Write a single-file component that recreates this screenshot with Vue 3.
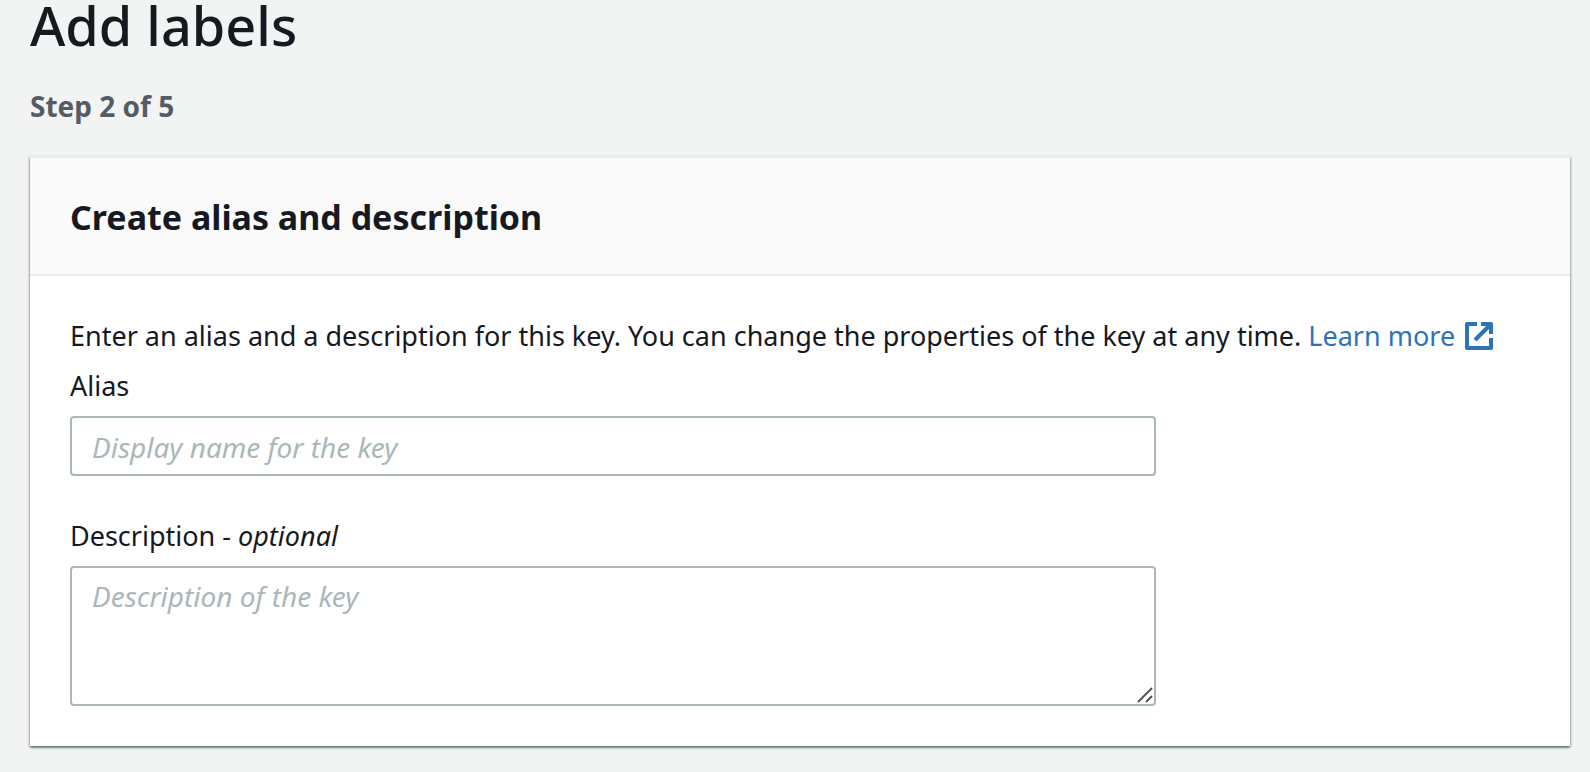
<script setup>
import { ref } from 'vue'

const alias = ref('')
const description = ref('')
</script>

<template>
  <main class="page">
    <h1 class="title">Add labels</h1>
    <p class="step">Step 2 of 5</p>
    <section class="card">
      <header class="card-header">
        <h2>Create alias and description</h2>
      </header>
      <form class="card-body" @submit.prevent>
        <p class="intro">
          Enter an alias and a description for this key. You can change the properties of the key at any time.
          <a href="#">Learn more<svg class="external" viewBox="0 0 28 28" aria-hidden="true">
            <path d="M12 2H2V26H26V16" />
            <path d="M16 2H26V12M26 2L10 18" />
          </svg></a>
        </p>
        <div class="field">
          <label for="alias">Alias</label>
          <input id="alias" v-model="alias" type="text" placeholder="Display name for the key" />
        </div>
        <div class="field">
          <label for="description">Description - <i>optional</i></label>
          <div class="area">
            <textarea id="description" v-model="description" placeholder="Description of the key"></textarea>
            <svg class="grip" viewBox="0 0 16 16" aria-hidden="true">
              <path d="M1 15L15 1M9 15L15 9" />
            </svg>
          </div>
        </div>
      </form>
    </section>
  </main>
</template>

<style>
body {
  background: #f2f3f3;
}
</style>

<style scoped>
.page {
  padding: 0 20px 24px 30px;
  color: #16191f;
  font-family: "Noto Sans", "Open Sans", sans-serif;
  font-size: 27px;
  font-weight: 420;
  line-height: 44px;
}
.title {
  margin: 0 0 34px;
  font-size: 54px;
  font-weight: 480;
  line-height: 50px;
}
.step {
  margin: 0 0 28px;
  color: #545b64;
  font-size: 28px;
  font-weight: 680;
}
.card {
  background: #fff;
  border-top: 2px solid #eaeded;
  box-shadow: 0 2px 2px 0 rgba(0, 28, 36, 0.4), 1px 1px 2px 0 rgba(0, 7, 22, 0.2), -1px 1px 2px 0 rgba(0, 7, 22, 0.2);
}
.card-header {
  padding: 37px 40px 35px;
  background: #fafafa;
  border-bottom: 2px solid #eaeded;
}
h2 {
  margin: 0;
  font-size: 34px;
  font-weight: 680;
  line-height: 44px;
}
.card-body {
  padding: 38px 40px 40px;
}
.intro {
  margin: 0 0 6px;
}
a {
  color: #2e73b8;
  text-decoration: none;
  white-space: nowrap;
}
.external {
  width: 28px;
  height: 28px;
  margin-left: 10px;
  vertical-align: -4px;
  fill: none;
  stroke: currentColor;
  stroke-width: 4;
  stroke-linejoin: round;
}
.field {
  display: flex;
  flex-direction: column;
  gap: 8px;
  width: calc(75% - 9px);
}
.field + .field {
  margin-top: 38px;
}
input,
textarea {
  display: block;
  box-sizing: border-box;
  width: 100%;
  margin: 0;
  border: 2px solid #aab7b8;
  border-radius: 4px;
  background: #fff;
  color: inherit;
  font: inherit;
  font-size: 28px;
}
input {
  height: 60px;
  padding: 2px 20px 0;
}
textarea {
  height: 140px;
  padding: 6px 20px;
  resize: none;
}
::placeholder {
  color: #aab7b8;
  font-style: italic;
  font-weight: 450;
  opacity: 1;
}
.area {
  position: relative;
}
.grip {
  position: absolute;
  right: 3px;
  bottom: 3px;
  width: 16px;
  height: 16px;
  fill: none;
  stroke: #555;
  stroke-width: 2;
  pointer-events: none;
}
</style>
